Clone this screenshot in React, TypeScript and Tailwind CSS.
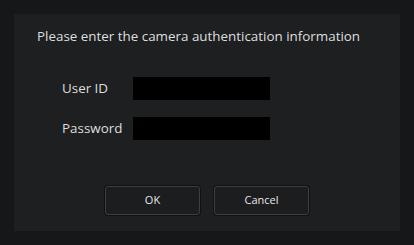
import React, { useState } from 'react';

const App: React.FC = () => {
    const [userId, setUserId] = useState<string>('');
    const [password, setPassword] = useState<string>('');

    return (
        <div className="w-[414px] h-[245px] bg-[#161718] p-[14px] font-['Open_Sans',sans-serif] text-[#dedede]">
            <div className="w-full h-full bg-[#1e1f21] flex flex-col">
                <p className="pl-[23px] pt-[13px] text-[13.4px] leading-[18px]">
                    Please enter the camera authentication information
                </p>

                {/* login fields */}
                <div className="flex flex-col gap-[17px] pl-[48px] mt-[32px]">
                    <div className="flex items-center">
                        <label className="w-[71px] text-[13.4px]">User ID</label>
                        <input
                            value={userId}
                            onChange={(e) => setUserId(e.target.value)}
                            className="w-[137px] h-[23px] bg-black outline-none px-1 text-[13px] text-white"
                        />
                    </div>
                    <div className="flex items-center">
                        <label className="w-[71px] text-[13.4px]">Password</label>
                        <input
                            type="password"
                            value={password}
                            onChange={(e) => setPassword(e.target.value)}
                            className="w-[137px] h-[23px] bg-black outline-none px-1 text-[13px] text-white"
                        />
                    </div>
                </div>

                <div className="flex justify-center gap-[14px] mt-[46px]">
                    <button className="w-[95px] h-[29px] rounded-[3px] border border-[#3d3e40] bg-[#1c1d1f] text-[11px] text-[#e6e6e6] shadow-[0_0_0_1px_#111]">
                        OK
                    </button>
                    <button className="w-[95px] h-[29px] rounded-[3px] border border-[#3d3e40] bg-[#1c1d1f] text-[11px] text-[#e6e6e6] shadow-[0_0_0_1px_#111]">
                        Cancel
                    </button>
                </div>
            </div>
        </div>
    );
};

export default App;
